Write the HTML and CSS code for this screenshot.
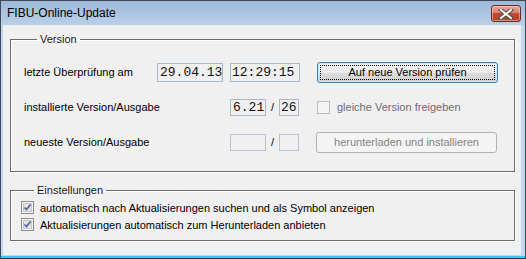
FILE: index.html
```html
<!DOCTYPE html>
<html lang="de">
<head>
    <meta charset="UTF-8">
    <title>FIBU-Online-Update</title>
    <link rel="stylesheet" href="styles.css">
</head>
<body>
    <div class="window">
        <div class="titlebar">
            <span class="title">FIBU-Online-Update</span>
            <button class="close" title="Schließen">
                <svg width="16" height="10" viewBox="0 0 16 10">
                    <path d="M3 1 L13 9 M13 1 L3 9" stroke="#4a4a4a" stroke-width="4" stroke-linecap="square"/>
                    <path d="M3 1 L13 9 M13 1 L3 9" stroke="#fff" stroke-width="2" stroke-linecap="square"/>
                </svg>
            </button>
        </div>
        <div class="client">
            <fieldset class="group version">
                <legend>Version</legend>
                <div class="row">
                    <span class="label label-check">letzte Überprüfung am</span>
                    <span class="field date">29.04.13</span>
                    <span class="field time">12:29:15</span>
                    <button class="btn default"><span class="focus">Auf neue Version prüfen</span></button>
                </div>
                <div class="row">
                    <span class="label label-wide">installierte Version/Ausgabe</span>
                    <span class="field ver">6.21</span>
                    <span class="slash">/</span>
                    <span class="field rev">26</span>
                    <label class="check disabled">
                        <span class="box"></span>
                        gleiche Version freigeben
                    </label>
                </div>
                <div class="row">
                    <span class="label label-wide">neueste Version/Ausgabe</span>
                    <span class="field ver empty"></span>
                    <span class="slash">/</span>
                    <span class="field rev empty"></span>
                    <button class="btn" disabled>herunterladen und installieren</button>
                </div>
            </fieldset>

            <fieldset class="group settings">
                <legend>Einstellungen</legend>
                <label class="check option">
                    <svg class="tick" width="13" height="13" viewBox="0 0 13 13">
                        <rect x="0.5" y="0.5" width="12" height="12" fill="#f4f4f4" stroke="#8f8f8f"/>
                        <rect x="2.5" y="2.5" width="8" height="8" fill="#e3e3e3" stroke="#c6c6c6"/>
                        <path d="M3.5 6.5 L5.5 8.5 L9.5 3.5" fill="none" stroke="#4e63a0" stroke-width="1.6"/>
                    </svg>
                    automatisch nach Aktualisierungen suchen und als Symbol anzeigen
                </label>
                <label class="check option">
                    <svg class="tick" width="13" height="13" viewBox="0 0 13 13">
                        <rect x="0.5" y="0.5" width="12" height="12" fill="#f4f4f4" stroke="#8f8f8f"/>
                        <rect x="2.5" y="2.5" width="8" height="8" fill="#e3e3e3" stroke="#c6c6c6"/>
                        <path d="M3.5 6.5 L5.5 8.5 L9.5 3.5" fill="none" stroke="#4e63a0" stroke-width="1.6"/>
                    </svg>
                    Aktualisierungen automatisch zum Herunterladen anbieten
                </label>
            </fieldset>
        </div>
    </div>
</body>
</html>
```

FILE: styles.css
```css
body {
    margin: 0;
    font-family: "Liberation Sans", Arial, sans-serif;
    font-size: 11px;
    color: #000;
}

.window {
    width: 526px;
    height: 259px;
    box-sizing: border-box;
    border: 1px solid #3f4a57;
    border-bottom-color: #2b3a48;
    background: linear-gradient(#9eb8d7 0, #b9d0ea 24px, #c3d8ee 25px, #c3d8ee 100%);
    box-shadow: inset 0 -2px 0 #3ec6f2;
    display: flex;
    flex-direction: column;
}

.titlebar {
    height: 24px;
    display: flex;
    justify-content: space-between;
    align-items: flex-start;
    padding: 0 4px 0 6px;
}

.title {
    font-size: 12px;
    line-height: 24px;
    color: #000;
}

.close {
    margin-top: 4px;
    width: 30px;
    height: 17px;
    padding: 0;
    border: 1px solid #6b2b22;
    border-radius: 3px;
    background: linear-gradient(#e4a99e 0%, #d6826f 45%, #c04a37 50%, #b8412d 100%);
    box-shadow: inset 0 0 0 1px rgba(255, 220, 210, 0.5);
    display: flex;
    align-items: center;
    justify-content: center;
}

.client {
    flex: 1;
    margin: 0 4px 3px 2px;
    background: #f0f0f0;
    padding: 8px 6px 0 7px;
}

.group {
    margin: 0;
    padding: 0;
    border: 1px solid #6a6a6a;
    box-shadow: 1px 1px 0 #fff, inset 1px 1px 0 #fff;
}

.group legend {
    margin-left: 13px;
    padding: 0 3px;
    line-height: 13px;
    color: #1a1a1a;
}

.version {
    padding: 16px 0 19px 13px;
}

.settings {
    margin-top: 12px;
    padding: 2px 0 7px 10px;
}

.row {
    height: 20px;
    display: flex;
    align-items: center;
}

.row + .row {
    margin-top: 15px;
}

.label-check {
    width: 133px;
}

.label-wide {
    width: 206px;
}

.field {
    box-sizing: border-box;
    height: 19px;
    border: 1px solid #a9b7c8;
    background: #f0f0f0;
    font-family: "Liberation Mono", "Courier New", monospace;
    font-size: 13px;
    line-height: 17px;
    padding-left: 2px;
    color: #111;
}

.date {
    width: 66px;
}

.time {
    width: 70px;
    margin-left: 7px;
    padding-left: 1px;
}

.ver {
    width: 36px;
    height: 17px;
    line-height: 15px;
}

.rev {
    width: 20px;
    height: 17px;
    line-height: 15px;
    padding-left: 1px;
}

.empty {
    border-color: #b9c3cf;
}

.slash {
    width: 13px;
    text-align: center;
}

.btn {
    height: 21px;
    width: 181px;
    margin-left: 17px;
    padding: 0;
    font-family: inherit;
    font-size: 11px;
    border: 1px solid #adb2b5;
    border-radius: 3px;
    background: #f4f4f4;
    color: #838383;
}

.btn.default {
    margin-left: 17px;
    border-color: #3c7fb1;
    background: linear-gradient(#f2f2f2 0%, #ebebeb 50%, #dddddd 51%, #cfcfcf 100%);
    box-shadow: inset 0 0 0 1px #c9e7f7;
    color: #000;
    display: flex;
    padding: 2px;
}

.focus {
    flex: 1;
    border: 1px dotted #000;
    line-height: 13px;
}

.check {
    display: flex;
    align-items: center;
    gap: 6px;
}

.check.disabled {
    margin-left: 18px;
    color: #6d6d6d;
    gap: 7px;
}

.check .box {
    width: 11px;
    height: 11px;
    border: 1px solid #bcbcbc;
    background: #f4f4f4;
}

.option {
    height: 17px;
}
```
